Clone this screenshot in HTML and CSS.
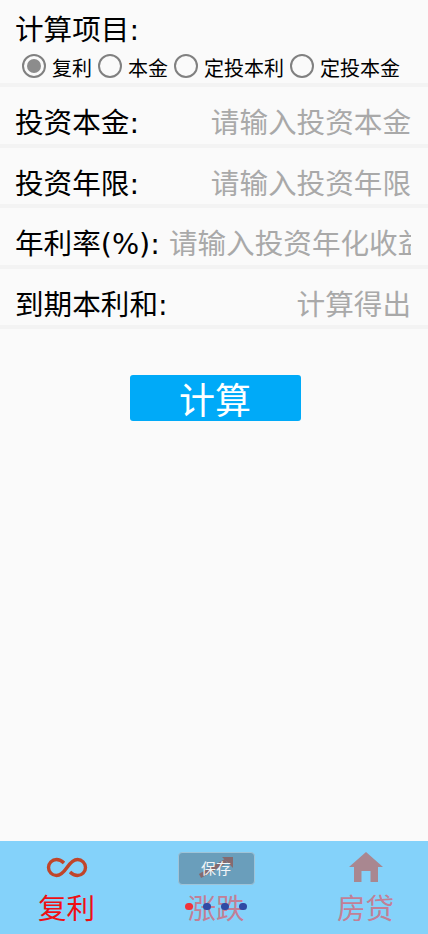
FILE: index.html
```html
<!DOCTYPE html>
<html lang="zh-CN">
<head>
<meta charset="utf-8">
<title>复利</title>
<link rel="stylesheet" href="styles.css">
</head>
<body>
<div class="app">
  <main class="form">
    <section class="project">
      <div class="label">计算项目:</div>
      <div class="radios">
        <span class="radio on"><i class="dot"></i><span class="radio-text">复利</span></span>
        <span class="radio"><i class="dot"></i><span class="radio-text">本金</span></span>
        <span class="radio"><i class="dot"></i><span class="radio-text">定投本利</span></span>
        <span class="radio"><i class="dot"></i><span class="radio-text">定投本金</span></span>
      </div>
    </section>
    <div class="row"><span class="label">投资本金:</span><span class="hint">请输入投资本金</span></div>
    <div class="row"><span class="label">投资年限:</span><span class="hint">请输入投资年限</span></div>
    <div class="row"><span class="label">年利率(%):</span><span class="hint clip">请输入投资年化收益率</span></div>
    <div class="row"><span class="label">到期本利和:</span><span class="hint">计算得出</span></div>
    <div class="action"><button class="calc">计算</button></div>
  </main>
  <nav class="tabs">
    <div class="tab active">
      <svg class="icon" viewBox="0 0 42 32"><path d="M18 12C15 9 12.500 8.500 10.500 8.500a8 8 0 0 0 0 16c3 0 6-1.500 10.500-8s7.500-8 10.500-8a8 8 0 0 1 0 16c-2 0-4.500-.5-7.500-3.500" fill="none" stroke="#c0452a" stroke-width="3.400"/></svg>
      <span>复利</span>
    </div>
    <div class="tab">
      <svg class="icon" viewBox="0 0 42 32"><path d="M5 25 31 10" stroke="#a88d95" stroke-width="4.500"/><path d="M27 6h11v11z" fill="#a88d95"/></svg>
      <span>涨跌</span>
    </div>
    <div class="tab">
      <svg class="icon" viewBox="0 0 42 32"><path d="M21 1 4 16h5v15h7.500V20h9v11H33V16h5z" fill="#a98790"/></svg>
      <span>房贷</span>
    </div>
  </nav>
  <div class="save">保存</div>
  <div class="dots"><i class="red"></i><i></i><i></i><i></i></div>
</div>
</body>
</html>
```

FILE: styles.css
```css
* { box-sizing: border-box; }
html, body { margin: 0; height: 100%; }
body { font-family: "DejaVu Sans", "Noto Sans CJK SC", sans-serif; background: #fafafa; color: #000; }
.app { position: relative; width: 428px; height: 934px; display: flex; flex-direction: column; overflow: hidden; }
.form { flex: 1; }
.label { font-size: 28.6px; line-height: 38px; white-space: nowrap; flex: none; }
.project { height: 87px; padding: 11px 0 0 15px; border-bottom: 4px solid #f3f3f3; }
.radios { display: flex; height: 28px; margin: 3px 0 0 7px; gap: 6px; align-items: center; }
.radio { display: flex; align-items: center; gap: 6px; }
.radio-text { font-size: 20px; line-height: 28px; padding-top: 6px; white-space: nowrap; }
.dot { width: 24px; height: 24px; border: 2.5px solid #808080; border-radius: 50%; display: flex; align-items: center; justify-content: center; }
.on .dot::before { content: ""; width: 14px; height: 14px; border-radius: 50%; background: #8c8c8c; }
.row { height: 60.6px; display: flex; align-items: center; padding: 16px 17px 0 15px; border-bottom: 4px solid #f3f3f3; }
.hint { flex: 1; min-width: 0; margin-left: 9px; text-align: right; font-size: 28.6px; line-height: 38px; color: #a9a9a9; white-space: nowrap; overflow: hidden; }
.clip { text-align: left; }
.action { display: flex; justify-content: center; margin-top: 45.600px; padding-left: 2px; }
.calc { width: 171px; height: 46px; border: 0; border-radius: 3px; background: #00aaf8; color: #fff; font: inherit; font-size: 36px; line-height: 46px; padding: 4px 0 0; }
.tabs { height: 93px; flex: none; display: flex; justify-content: center; gap: 91.500px; padding-left: 4px; background: #84d2fa; }
.tab { width: 58px; display: flex; flex-direction: column; align-items: center; color: #c27f96; font-size: 28.6px; line-height: 38px; }
.tab .icon { display: block; flex: none; width: 42px; height: 32px; margin-top: 10px; margin-bottom: 7px; }
.tab.active { color: #ee0f14; }
.save { position: absolute; left: 177.500px; top: 852px; width: 77px; height: 33px; border: 1px solid #a0c4d8; border-radius: 4px; background: rgba(28, 3, 0, .25); color: #f2f5f7; font-size: 15px; line-height: 33px; text-align: center; }
.dots { position: absolute; left: 185.300px; top: 903px; display: flex; gap: 10.700px; }
.dots i { width: 7.300px; height: 7.300px; border-radius: 50%; background: #2f4aa5; }
.dots i.red { background: #f0323a; }
```
